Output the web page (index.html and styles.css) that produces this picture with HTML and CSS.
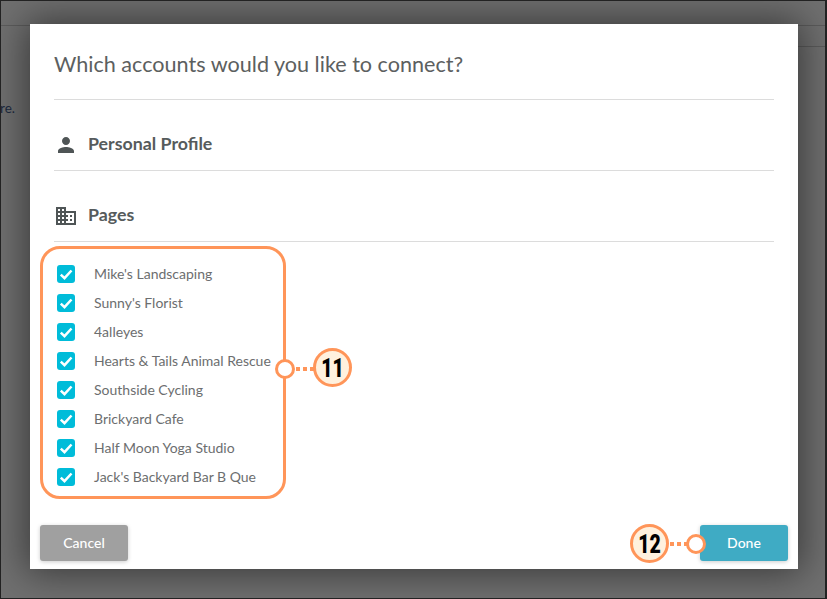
FILE: index.html
```html
<!DOCTYPE html>
<html lang="en">
<head>
<meta charset="utf-8">
<title>Connect accounts</title>
<link rel="stylesheet" href="styles.css">
</head>
<body>
<div class="frame">
  <div class="bg-line bg-line-top"></div>
  <div class="bg-line bg-line-right"></div>
  <div class="bg-text">re.</div>
  <div class="modal">
    <h1 class="title">Which accounts would you like to connect?</h1>
    <section class="section">
      <svg class="sec-icon" viewBox="0 0 24 24"><path d="M12 12c2.21 0 4-1.79 4-4s-1.79-4-4-4-4 1.79-4 4 1.79 4 4 4zm0 2c-2.67 0-8 1.34-8 4v2h16v-2c0-2.66-5.33-4-8-4z"/></svg>
      <h2 class="sec-title">Personal Profile</h2>
    </section>
    <section class="section">
      <svg class="sec-icon" viewBox="0 0 24 24"><path d="M12 7V3H2v18h20V7H12zM6 19H4v-2h2v2zm0-4H4v-2h2v2zm0-4H4V9h2v2zm0-4H4V5h2v2zm4 12H8v-2h2v2zm0-4H8v-2h2v2zm0-4H8V9h2v2zm0-4H8V5h2v2zm10 12h-8v-2h2v-2h-2v-2h2v-2h-2V9h8v10zm-2-8h-2v2h2v-2zm0 4h-2v2h2v-2z"/></svg>
      <h2 class="sec-title">Pages</h2>
    </section>
    <ul class="list">
      <li class="row"><svg class="check" viewBox="0 0 18 18"><path d="M3.8 9.6l3.7 3.6 7-7.7"/></svg><span class="row-label">Mike's Landscaping</span></li>
      <li class="row"><svg class="check" viewBox="0 0 18 18"><path d="M3.8 9.6l3.7 3.6 7-7.7"/></svg><span class="row-label">Sunny's Florist</span></li>
      <li class="row"><svg class="check" viewBox="0 0 18 18"><path d="M3.8 9.6l3.7 3.6 7-7.7"/></svg><span class="row-label">4alleyes</span></li>
      <li class="row"><svg class="check" viewBox="0 0 18 18"><path d="M3.8 9.6l3.7 3.6 7-7.7"/></svg><span class="row-label">Hearts &amp; Tails Animal Rescue</span></li>
      <li class="row"><svg class="check" viewBox="0 0 18 18"><path d="M3.8 9.6l3.7 3.6 7-7.7"/></svg><span class="row-label">Southside Cycling</span></li>
      <li class="row"><svg class="check" viewBox="0 0 18 18"><path d="M3.8 9.6l3.7 3.6 7-7.7"/></svg><span class="row-label">Brickyard Cafe</span></li>
      <li class="row"><svg class="check" viewBox="0 0 18 18"><path d="M3.8 9.6l3.7 3.6 7-7.7"/></svg><span class="row-label">Half Moon Yoga Studio</span></li>
      <li class="row"><svg class="check" viewBox="0 0 18 18"><path d="M3.8 9.6l3.7 3.6 7-7.7"/></svg><span class="row-label">Jack's Backyard Bar B Que</span></li>
    </ul>
    <div class="footer">
      <button class="btn btn-cancel">Cancel</button>
      <button class="btn btn-done">Done</button>
    </div>
  </div>
  <div class="callout-box"></div>
  <div class="dot dot-11"></div>
  <div class="dash dash-11"></div>
  <div class="badge badge-11"><span class="badge-num">11</span></div>
  <div class="dot dot-12"></div>
  <div class="dash dash-12"></div>
  <div class="badge badge-12"><span class="badge-num">12</span></div>
</div>
</body>
</html>
```
FILE: styles.css
```css
* { box-sizing: border-box; }
html, body { margin: 0; padding: 0; }
body { width: 827px; height: 599px; overflow: hidden; font-family: Lato, sans-serif; background: #000; }
.frame {
  position: relative;
  width: 827px;
  height: 599px;
  border: 1px solid #222;
  border-width: 1px 2px 1px 1px;
  background: #707070;
  padding: 23px 0 0 29px;
  overflow: hidden;
}
.bg-line { position: absolute; height: 1px; background: #5c5c5c; }
.bg-line-top { left: 0; right: 0; top: 24px; }
.bg-line-right { left: 797px; right: 0; top: 45px; }
.bg-text { position: absolute; left: -1px; top: 98px; font-size: 13.5px; line-height: 18px; color: #1c2a40; }
.modal {
  position: relative;
  width: 768px;
  height: 545px;
  background: #fff;
  padding: 0 24px 0;
  box-shadow: 0 0 36px 4px rgba(0,0,0,.5);
  display: flex;
  flex-direction: column;
}
.title {
  margin: 0;
  height: 76px;
  border-bottom: 1px solid #dcdcdc;
  font-size: 21.6px;
  font-weight: 400;
  line-height: 80px;
  color: #5c6060;
}
.section {
  height: 71px;
  flex: none;
  border-bottom: 1px solid #dcdcdc;
  display: flex;
  align-items: center;
  padding-top: 19px;
  gap: 10px;
}
.sec-icon { width: 24px; height: 24px; fill: #4f5556; flex: none; }
.sec-title { margin: -3px 0 0; font-size: 17.8px; font-weight: 700; color: #565b5c; }
.list { list-style: none; margin: 18px 0 0; padding: 0 0 0 3px; }
.row { height: 29px; display: flex; align-items: center; font-size: 14px; color: #6c6e6f; }
.row-label { margin-top: -2px; }
.check { width: 18px; height: 18px; margin-top: -1px; background: #00bcd9; border-radius: 3px; margin-right: 19px; flex: none; fill: none; stroke: #fff; stroke-width: 2.5; }
.footer { position: absolute; left: 10px; right: 10px; bottom: 8px; display: flex; justify-content: space-between; }
.btn {
  width: 88px;
  height: 36px;
  border: 0;
  padding: 0 0 2px;
  border-radius: 3px;
  color: #fff;
  font: 500 14px Lato, sans-serif;
  box-shadow: 0 1px 4px rgba(0,0,0,.2);
}
.btn-cancel { background: #a0a0a0; }
.btn-done { background: #3fabc4; }
.callout-box {
  position: absolute;
  left: 39px;
  top: 245px;
  width: 246px;
  height: 253px;
  border: 3px solid #ff9559;
  border-radius: 20px;
}
.dot {
  position: absolute;
  width: 20px;
  height: 20px;
  border: 3.5px solid #ff9559;
  border-radius: 50%;
  background: #fff;
}
.dot-11 { left: 274px; top: 358px; }
.dot-12 { left: 685px; top: 533px; }
.dash {
  position: absolute;
  height: 4px;
  width: 18px;
  background: repeating-linear-gradient(90deg, #ff9559 0 4px, transparent 4px 7px);
}
.dash-11 { left: 295px; top: 366px; }
.dash-12 { left: 669px; top: 541px; }
.badge {
  position: absolute;
  width: 39px;
  height: 39px;
  border: 3px solid #ff9559;
  border-radius: 50%;
  background: #fff1de;
  color: #000;
  font: 900 25px/35px Roboto, sans-serif;
  text-align: center;
}
.badge-num { display: inline-block; transform: scaleX(.78); }
.badge-11 { left: 312px; top: 347px; }
.badge-12 { left: 629px; top: 523px; }
```
